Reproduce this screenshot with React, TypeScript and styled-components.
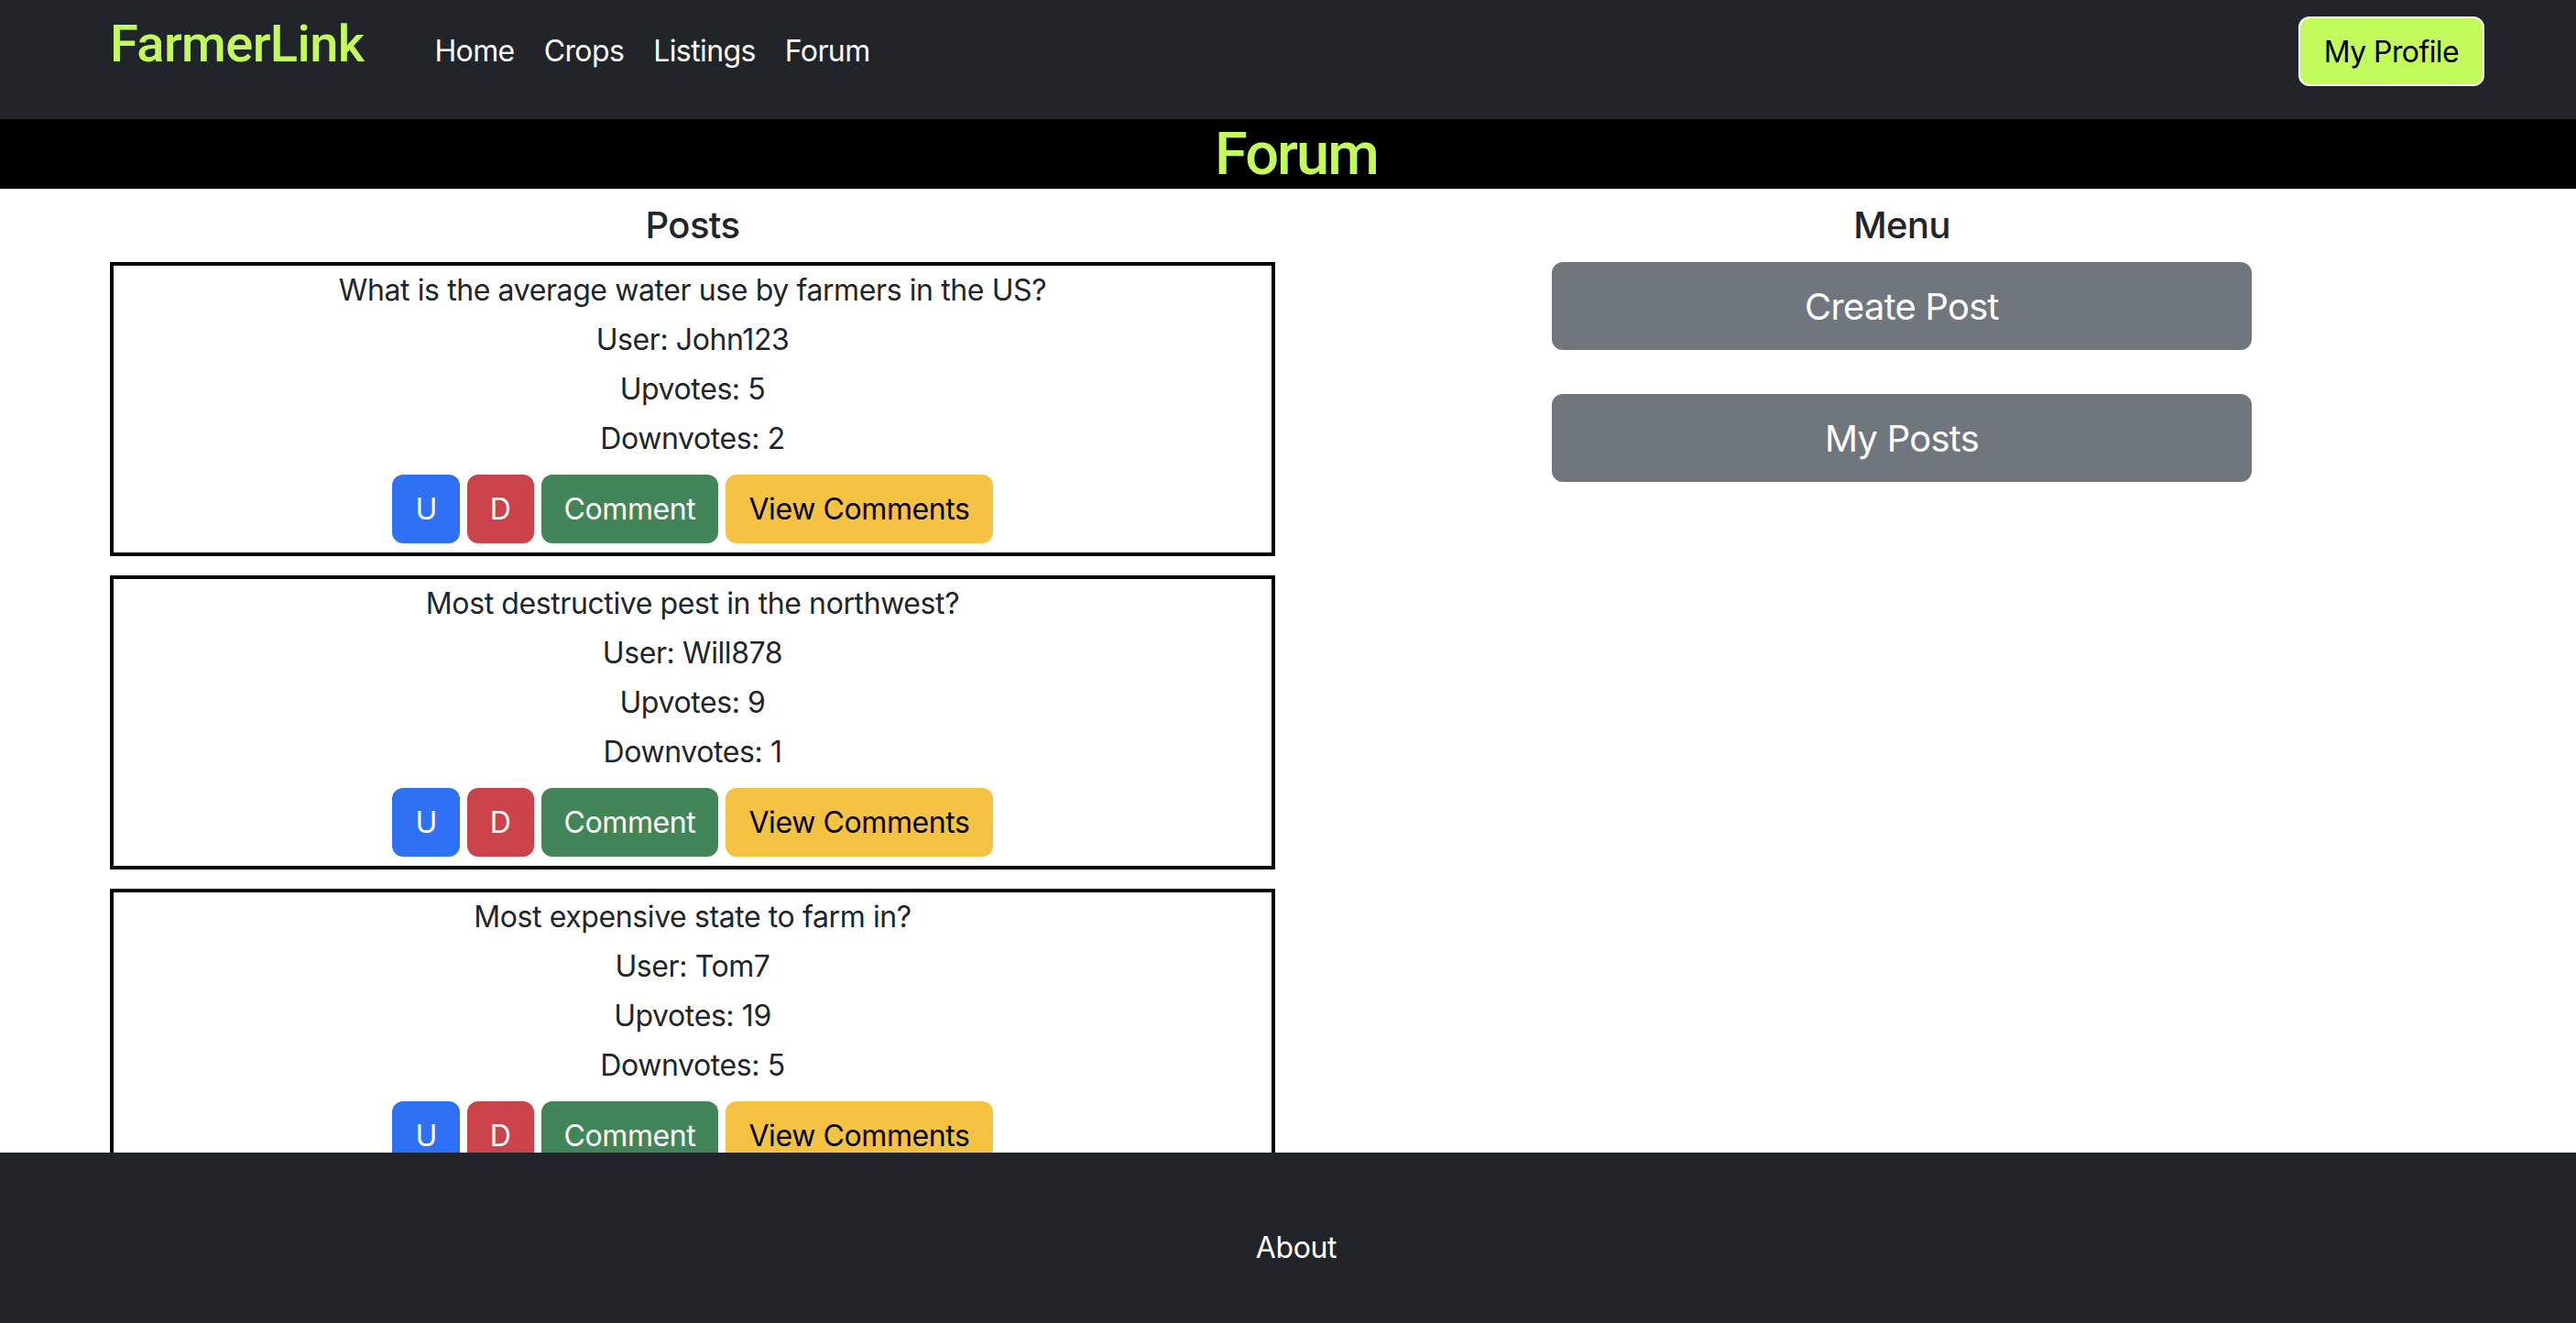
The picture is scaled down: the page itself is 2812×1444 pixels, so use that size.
import React from "react";
import styled, { createGlobalStyle } from "styled-components";

const GlobalStyle = createGlobalStyle`
  html, body {
    margin: 0;
    padding: 0;
    background: #ffffff;
    overflow: hidden;
  }
  body {
    font-family: Inter, "Noto Sans", sans-serif;
    font-size: 32px;
    letter-spacing: -0.4px;
    color: #212529;
  }
  * { box-sizing: border-box; }
`;

const Page = styled.div`
  height: 100vh;
  display: flex;
  flex-direction: column;
`;

const NavBar = styled.header`
  flex: 0 0 130px;
  background: #212529;
  display: flex;
  align-items: center;
  padding: 0 100px 18px 120px;
`;

const Brand = styled.a`
  font-family: Roboto, "Liberation Sans", Arial, sans-serif;
  font-weight: 500;
  font-size: 56px;
  letter-spacing: -0.6px;
  line-height: 64px;
  color: #c3fa5c;
  text-decoration: none;
  margin-bottom: 16px;
  margin-right: 61px;
`;

const NavLinks = styled.nav`
  display: flex;
  align-items: center;
  flex: 1;
`;

const NavLink = styled.a`
  font-size: 32px;
  letter-spacing: -0.6px;
  line-height: 48px;
  color: #ffffff;
  text-decoration: none;
  padding: 0 16px;
`;

const ProfileButton = styled.button`
  height: 76px;
  padding: 0 26px;
  background: #c3fa5c;
  border: 2px solid #ffffff;
  border-radius: 12px;
  color: #000000;
  font-family: Inter, sans-serif;
  font-size: 32px;
  letter-spacing: -0.6px;
`;

const TitleBar = styled.div`
  flex: 0 0 76px;
  background: #000000;
  display: flex;
  align-items: center;
  justify-content: center;
  padding-left: 18px;
`;

const Title = styled.h1`
  margin: 0;
  font-family: Roboto, "Liberation Sans", Arial, sans-serif;
  font-weight: 500;
  font-size: 65px;
  letter-spacing: -2px;
  line-height: 76px;
  color: #c3fa5c;
`;

const Main = styled.main`
  flex: 1;
  min-height: 0;
  overflow: hidden;
  display: grid;
  grid-template-columns: 1fr 1fr;
  column-gap: 48px;
  padding: 0 100px 0 120px;
  align-items: start;
`;

const Column = styled.section`
  display: flex;
  flex-direction: column;
  align-items: center;
`;

const ColumnHeading = styled.h2`
  margin: 0;
  font-size: 40px;
  font-weight: 500;
  letter-spacing: -0.6px;
  line-height: 80px;
  text-align: center;
`;

const PostList = styled.div`
  width: 100%;
  display: flex;
  flex-direction: column;
  gap: 21px;
`;

const PostCard = styled.article`
  border: 4px solid #000000;
  padding: 0 0 10px;
  display: flex;
  flex-direction: column;
  align-items: center;
`;

const PostLine = styled.div`
  line-height: 54px;
  font-size: 32px;
  text-align: center;
`;

const ActionRow = styled.div`
  display: flex;
  justify-content: center;
  gap: 8px;
  margin-top: 12px;
`;

const palette = {
  primary: { bg: "#2f71f5", fg: "#ffffff" },
  danger: { bg: "#cb444b", fg: "#ffffff" },
  success: { bg: "#418558", fg: "#ffffff" },
  warning: { bg: "#f6c244", fg: "#000000" },
};

type Variant = keyof typeof palette;

const ActionButton = styled.button<{ $variant: Variant }>`
  height: 75px;
  padding: 0 25px;
  border: none;
  border-radius: 12px;
  font-family: Inter, sans-serif;
  font-size: 32px;
  letter-spacing: -0.4px;
  background: ${(p) => palette[p.$variant].bg};
  color: ${(p) => palette[p.$variant].fg};
`;

const MenuList = styled.div`
  width: 60%;
  display: flex;
  flex-direction: column;
  gap: 48px;
`;

const MenuButton = styled.button`
  height: 96px;
  width: 100%;
  border: none;
  border-radius: 12px;
  background: #6f767e;
  color: #ffffff;
  font-family: Inter, sans-serif;
  font-size: 40px;
  letter-spacing: -0.8px;
`;

const Footer = styled.footer`
  flex: 0 0 186px;
  background: #212529;
  display: flex;
  justify-content: center;
  padding: 80px 0 0 18px;
`;

const FooterLink = styled.a`
  color: #ffffff;
  font-size: 32px;
  line-height: 48px;
  height: 48px;
  text-decoration: none;
`;

const posts = [
  { title: "What is the average water use by farmers in the US?", user: "John123", up: 5, down: 2 },
  { title: "Most destructive pest in the northwest?", user: "Will878", up: 9, down: 1 },
  { title: "Most expensive state to farm in?", user: "Tom7", up: 19, down: 5 },
];

export default function App() {
  return (
    <>
      <GlobalStyle />
      <Page>
        <NavBar>
          <Brand href="#">FarmerLink</Brand>
          <NavLinks>
            <NavLink href="#">Home</NavLink>
            <NavLink href="#">Crops</NavLink>
            <NavLink href="#">Listings</NavLink>
            <NavLink href="#">Forum</NavLink>
          </NavLinks>
          <ProfileButton>My Profile</ProfileButton>
        </NavBar>
        <TitleBar>
          <Title>Forum</Title>
        </TitleBar>
        <Main>
          <Column>
            <ColumnHeading>Posts</ColumnHeading>
            <PostList>
              {posts.map((p) => (
                <PostCard key={p.title}>
                  <PostLine>{p.title}</PostLine>
                  <PostLine>User: {p.user}</PostLine>
                  <PostLine>Upvotes: {p.up}</PostLine>
                  <PostLine>Downvotes: {p.down}</PostLine>
                  <ActionRow>
                    <ActionButton $variant="primary">U</ActionButton>
                    <ActionButton $variant="danger">D</ActionButton>
                    <ActionButton $variant="success">Comment</ActionButton>
                    <ActionButton $variant="warning">View Comments</ActionButton>
                  </ActionRow>
                </PostCard>
              ))}
            </PostList>
          </Column>
          <Column>
            <ColumnHeading>Menu</ColumnHeading>
            <MenuList>
              <MenuButton>Create Post</MenuButton>
              <MenuButton>My Posts</MenuButton>
            </MenuList>
          </Column>
        </Main>
        <Footer>
          <FooterLink href="#">About</FooterLink>
        </Footer>
      </Page>
    </>
  );
}
